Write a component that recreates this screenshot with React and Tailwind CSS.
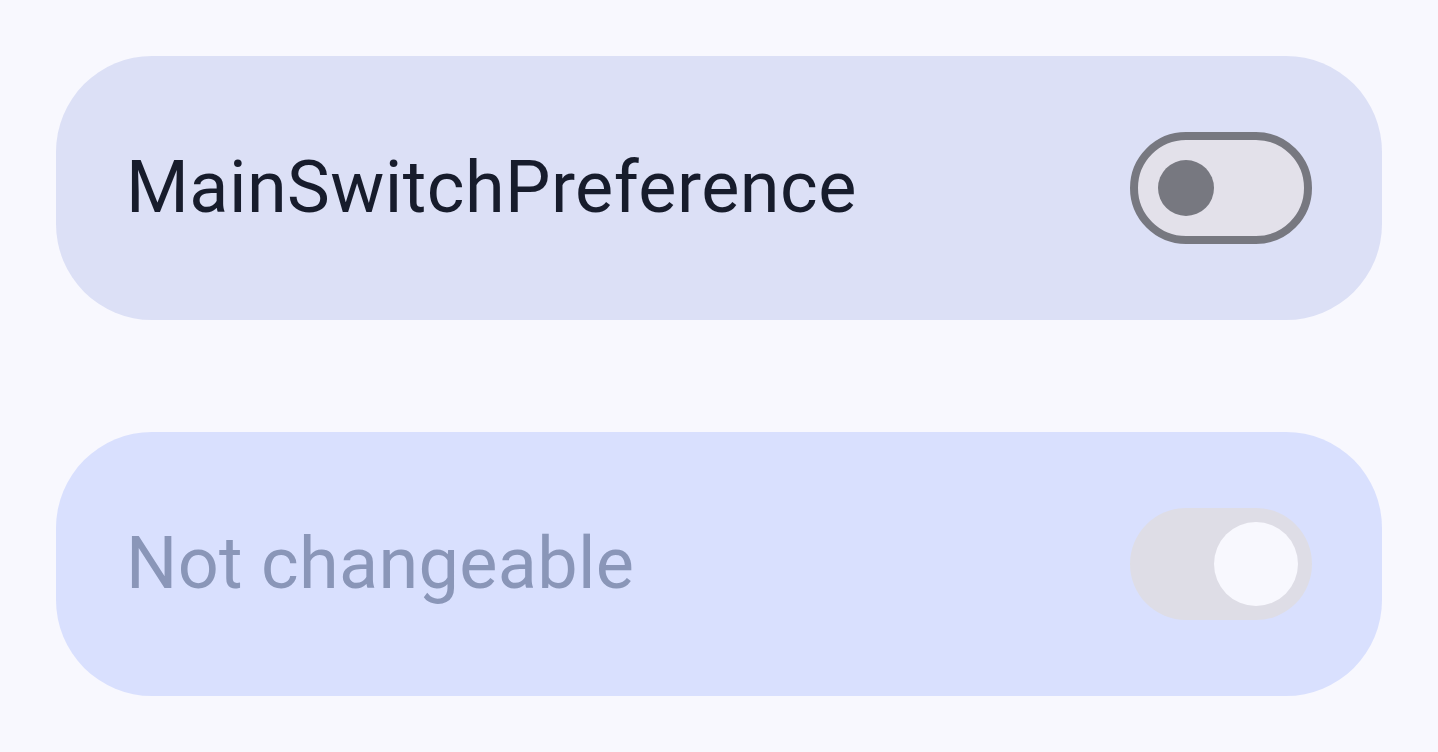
export default function App() {
  return (
    <div className="w-[1438px] h-[752px] bg-[#f8f8fe] pt-[56px] px-[56px] flex flex-col gap-[112px]" style={{ fontFamily: 'Roboto, "Liberation Sans", sans-serif' }}>
      <div className="h-[264px] rounded-[96px] bg-[#dce0f6] flex items-center justify-between pl-[70px] pr-[70px]">
        <span className="text-[72px] leading-none text-[#171c2c] tracking-[0.45px]">MainSwitchPreference</span>
        <div className="w-[182px] h-[112px] rounded-full border-[8px] border-[#777880] bg-[#e3e1ea] flex items-center pl-[20px]">
          <div className="w-[56px] h-[56px] rounded-full bg-[#777880]" />
        </div>
      </div>
      <div className="h-[264px] rounded-[96px] bg-[#d9e0fe] flex items-center justify-between pl-[70px] pr-[70px]">
        <span className="text-[72px] leading-none text-[#8a96b8] tracking-[0.3px]">Not changeable</span>
        <div className="w-[182px] h-[112px] rounded-full bg-[#dedde6] flex items-center justify-end pr-[14px]">
          <div className="w-[84px] h-[84px] rounded-full bg-[#f8f8fe]" />
        </div>
      </div>
    </div>
  );
}
